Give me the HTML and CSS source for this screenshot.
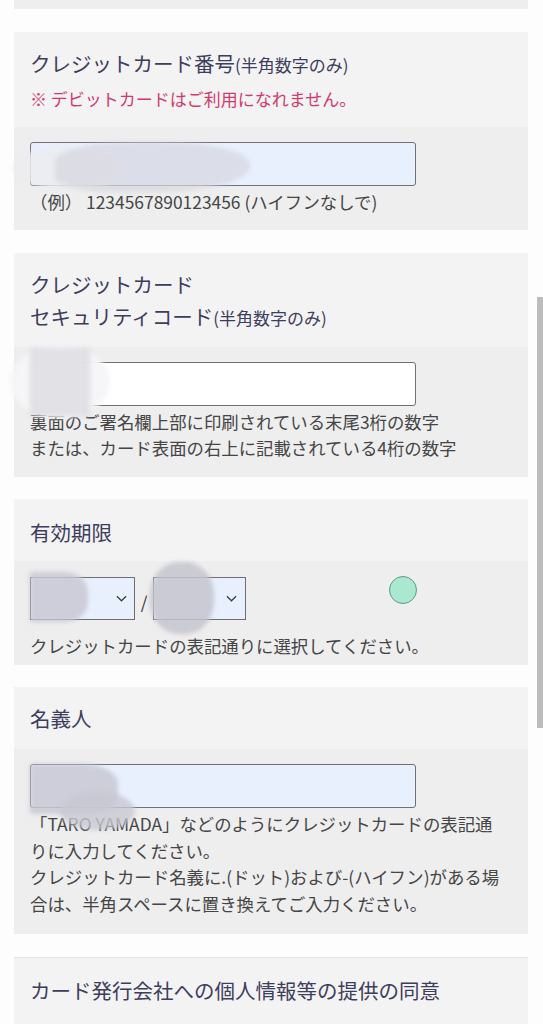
FILE: index.html
```html
<!DOCTYPE html>
<html lang="ja">
<head>
<meta charset="utf-8">
<meta name="viewport" content="width=device-width, initial-scale=1">
<title>クレジットカード情報</title>
<link rel="stylesheet" href="styles.css">
</head>
<body>
<main class="page">
  <div class="card-tail"></div>

  <section class="field">
    <div class="field-head">
      <h2 class="field-title">クレジットカード番号<span class="note">(半角数字のみ)</span></h2>
      <p class="warn">※ デビットカードはご利用になれません。</p>
    </div>
    <div class="field-body">
      <input class="text-input autofill" type="text" aria-label="クレジットカード番号">
      <p class="help">（例） 1234567890123456 (ハイフンなしで)</p>
    </div>
  </section>

  <section class="field">
    <div class="field-head">
      <h2 class="field-title">クレジットカード<br>セキュリティコード<span class="note">(半角数字のみ)</span></h2>
    </div>
    <div class="field-body">
      <input class="text-input" type="text" aria-label="セキュリティコード">
      <p class="help">裏面のご署名欄上部に印刷されている末尾3桁の数字<br>または、カード表面の右上に記載されている4桁の数字</p>
    </div>
  </section>

  <section class="field">
    <div class="field-head field-head--single">
      <h2 class="field-title">有効期限</h2>
    </div>
    <div class="field-body field-body--expiry">
      <div class="expiry">
        <span class="select-wrap select-wrap--month">
          <select class="select" aria-label="月"><option></option></select>
          <svg class="chevron" viewBox="0 0 12 7" aria-hidden="true"><path d="M1 1l5 5 5-5"/></svg>
        </span>
        <span class="slash">/</span>
        <span class="select-wrap select-wrap--year">
          <select class="select" aria-label="年"><option></option></select>
          <svg class="chevron" viewBox="0 0 12 7" aria-hidden="true"><path d="M1 1l5 5 5-5"/></svg>
        </span>
      </div>
      <p class="help help--expiry">クレジットカードの表記通りに選択してください。</p>
    </div>
  </section>

  <section class="field">
    <div class="field-head">
      <h2 class="field-title">名義人</h2>
    </div>
    <div class="field-body field-body--name">
      <input class="text-input autofill" type="text" aria-label="名義人">
      <p class="help">「TARO YAMADA」などのようにクレジットカードの表記通りに入力してください。<br>クレジットカード名義に.(ドット)および-(ハイフン)がある場合は、半角スペースに置き換えてご入力ください。</p>
    </div>
  </section>

  <section class="field field--consent">
    <div class="field-head">
      <h2 class="field-title">カード発行会社への個人情報等の提供の同意</h2>
    </div>
  </section>
</main>

<div class="overlay" aria-hidden="true">
  <div class="blob blob-1a"></div>
  <div class="blob blob-1b"></div>
  <div class="blob blob-2a"></div>
  <div class="blob blob-2b"></div>
  <div class="blob blob-3a"></div>
  <div class="blob blob-3b"></div>
  <div class="blob blob-4a"></div>
  <div class="blob blob-4b"></div>
  <div class="touch-dot"></div>
  <div class="scroll-thumb"></div>
</div>
</body>
</html>
```

FILE: styles.css
```css
* {
  box-sizing: border-box;
}

html, body {
  margin: 0;
  padding: 0;
  background: #fdfdfd;
}

body {
  font-family: "Noto Sans CJK JP", "Noto Sans", sans-serif;
  color: #454545;
  overflow: hidden;
  height: 1024px;
  position: relative;
}

.page {
  padding: 0 15px 0 14px;
}

.card-tail {
  height: 9px;
  background: #eeeeef;
}

.field {
  margin-top: 22.5px;
}

.field-head {
  background: #f3f3f4;
  padding: 15px 16px 15px;
}

.field-head--single {
  padding: 17px 16px 13px;
}

.field-title {
  margin: 0;
  font-size: 20.5px;
  line-height: 32px;
  font-weight: 400;
  color: #3d3d5c;
}

.note {
  font-size: 17px;
  line-height: 1;
}

.warn {
  margin: 6px 0 0;
  font-size: 17px;
  line-height: 27px;
  color: #d23a6b;
}

.field-body {
  background: #eeeeef;
  padding: 15px 16px 15px;
}

.field-body--expiry {
  padding: 16px 16px 5px;
}

.field-body--name {
  padding-bottom: 17px;
}

.text-input {
  display: block;
  width: 386px;
  height: 44px;
  margin: 0;
  padding: 0 10px;
  border: 1px solid #707070;
  border-radius: 3px;
  background: #ffffff;
  font: inherit;
  outline: none;
}

.text-input.autofill {
  background: #e8f0fe;
}

.help {
  margin: 3px 0 0;
  max-width: 474px;
  font-size: 17.4px;
  line-height: 26.5px;
  color: #454545;
}

.help--expiry {
  margin-top: 13px;
}

.expiry {
  display: flex;
  align-items: center;
  height: 43px;
}

.select-wrap {
  position: relative;
  display: block;
  height: 43px;
}

.select-wrap--month {
  width: 105px;
}

.select-wrap--year {
  width: 93px;
}

.select {
  appearance: none;
  -webkit-appearance: none;
  display: block;
  width: 100%;
  height: 100%;
  margin: 0;
  border: 1px solid #6e6e6e;
  border-radius: 0;
  background: #e8f0fe;
  font: inherit;
}

.chevron {
  position: absolute;
  right: 8px;
  top: 18px;
  width: 11px;
  height: 7px;
  fill: none;
  stroke: #3a3a3a;
  stroke-width: 1.3;
  pointer-events: none;
}

.select-wrap--year .chevron {
  right: 9px;
}

.slash {
  width: 18px;
  padding-top: 6px;
  text-align: center;
  font-size: 17px;
  color: #333;
}

.field--consent .field-head {
  border-top: 1px solid #e2e2e4;
  height: 80px;
  padding-top: 16px;
}

/* overlays: redaction smudges, touch indicator, scrollbar */
.overlay {
  position: absolute;
  inset: 0;
  pointer-events: none;
}

.blob {
  position: absolute;
  filter: blur(2px);
}

.blob-1a {
  left: 14px;
  top: 146px;
  width: 110px;
  height: 44px;
  border-radius: 50%;
  background: rgba(236, 236, 240, 0.85);
}

.blob-1b {
  left: 55px;
  top: 142px;
  width: 195px;
  height: 50px;
  border-radius: 40% 45% 50% 30%;
  background: rgba(214, 214, 222, 0.7);
}

.blob-2a {
  left: 10px;
  top: 346px;
  width: 100px;
  height: 72px;
  border-radius: 50%;
  background: rgba(246, 246, 248, 0.95);
}

.blob-2b {
  left: 30px;
  top: 348px;
  width: 60px;
  height: 68px;
  background: rgba(218, 218, 224, 0.75);
}

.blob-3a {
  left: 30px;
  top: 572px;
  width: 58px;
  height: 50px;
  border-radius: 0 40% 40% 0;
  background: rgba(200, 200, 210, 0.85);
}

.blob-3b {
  left: 150px;
  top: 562px;
  width: 64px;
  height: 72px;
  border-radius: 45%;
  background: rgba(196, 196, 206, 0.85);
}

.blob-4a {
  left: 30px;
  top: 764px;
  width: 88px;
  height: 50px;
  border-radius: 0 40% 30% 0;
  background: rgba(200, 200, 210, 0.85);
}

.blob-4b {
  left: 60px;
  top: 792px;
  width: 75px;
  height: 38px;
  border-radius: 50%;
  background: rgba(200, 200, 210, 0.8);
}

.touch-dot {
  position: absolute;
  left: 389px;
  top: 576px;
  width: 28px;
  height: 28px;
  border-radius: 50%;
  background: #aae8cf;
  border: 1.5px solid #5f9a8c;
}

.scroll-thumb {
  position: absolute;
  left: 537px;
  top: 297px;
  width: 6px;
  height: 431px;
  background: #bcbcbc;
}
```
